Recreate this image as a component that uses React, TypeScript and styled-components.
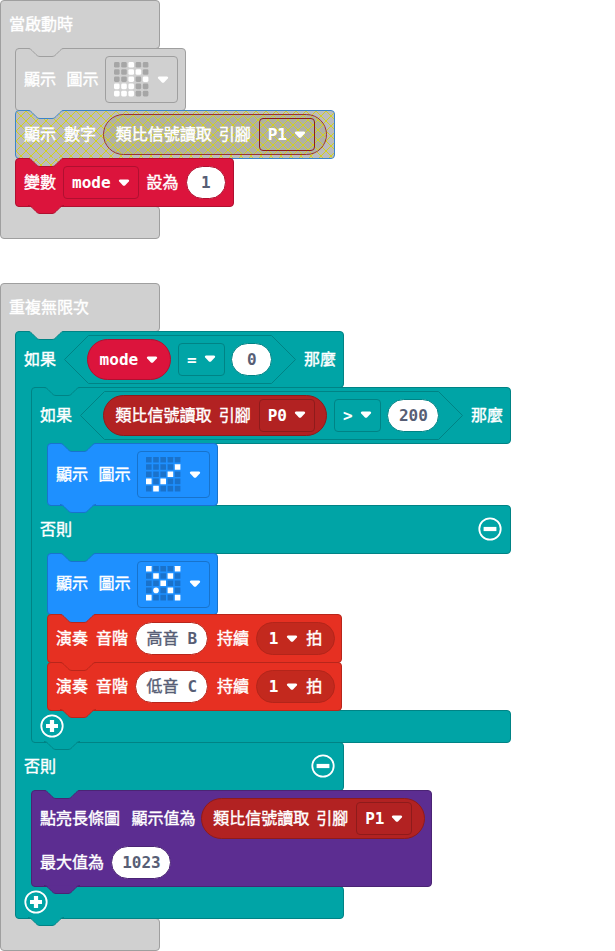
import React from "react";
import styled, { createGlobalStyle, css } from "styled-components";

const GlobalStyle = createGlobalStyle`
  * { box-sizing: border-box; }
  body { margin: 0; background: #fff; overflow: hidden; }
`;

type Tone = { fill: string; line: string };
const tones = {
  grey: { fill: "#d0d0d0", line: "#9f9f9f" },
  logic: { fill: "#00a4a6", line: "#008385" },
  variable: { fill: "#dc143c", line: "#b01030" },
  pins: { fill: "#b22222", line: "#8e1b1b" },
  basic: { fill: "#1e90ff", line: "#1873cc" },
  music: { fill: "#e63022", line: "#b8261b" },
  beat: { fill: "#c3291e", line: "#b3251a" },
  led: { fill: "#5c2d91", line: "#4a2474" },
  disabled: { fill: "#bcbcbc", line: "#3b85c8" },
  disabledPins: { fill: "#b0b0a4", line: "#9b3434" },
} satisfies Record<string, Tone>;

const Workspace = styled.main`
  display: flex;
  flex-direction: column;
  align-items: flex-start;
  gap: 44px;
  width: 615px;
  height: 951px;
  overflow: hidden;
  font: 700 16px/24px "DejaVu Sans Mono", "Noto Sans CJK TC", monospace;
  color: #fff;
`;

const Label = styled.span<{ $gap?: number }>`
  flex: none;
  margin-left: ${(p) => p.$gap ?? 0}px;
  font-weight: 400;
  -webkit-text-stroke: 0.4px currentColor;
  white-space: pre;
`;

const Code = styled.span<{ $gap?: number }>`
  flex: none;
  margin-left: ${(p) => p.$gap ?? 0}px;
`;

const Wrap = styled.div`
  position: relative;
  display: flex;
  flex-direction: column;
  align-items: flex-start;
  margin-bottom: -1px;
`;

const Script = styled.section`
  display: flex;
  flex-direction: column;
  & > ${Wrap} { margin-bottom: 0; }
`;

const Bar = styled.div<{ $tone: Tone; $w: number; $h: number; $part: "head" | "mid" | "foot" }>`
  display: flex;
  align-items: center;
  width: ${(p) => p.$w}px;
  height: ${(p) => p.$h + 1}px;
  padding: 0 8px 1px 8px;
  background: ${(p) => p.$tone.fill};
  border: 1px solid ${(p) => p.$tone.line};
  border-radius: ${(p) => (p.$part === "head" ? "4px 4px 4px 0" : p.$part === "mid" ? "0 4px 4px 0" : "0 4px 4px 4px")};
  & ${Label}, & ${Code} { padding-top: 1px; }
`;

const Mouth = styled.div`
  display: flex;
  margin: -1px 0;
  position: relative;
  z-index: 1;
`;

const Spine = styled.div<{ $tone: Tone; $w: number }>`
  flex: none;
  width: ${(p) => p.$w + 3}px;
  margin-right: -3px;
  background: ${(p) => p.$tone.fill};
  border-left: 1px solid ${(p) => p.$tone.line};
`;

const Stack = styled.div`
  position: relative;
  display: flex;
  flex-direction: column;
  align-items: flex-start;
  & > *:last-child { margin-bottom: 0; }
`;

const Statement = styled.div<{ $tone: Tone; $w: number; $h: number }>`
  position: relative;
  display: flex;
  flex-direction: column;
  width: ${(p) => p.$w}px;
  height: ${(p) => p.$h + 1}px;
  margin-bottom: -1px;
  padding-left: 8px;
  background: ${(p) => p.$tone.fill};
  border: 1px solid ${(p) => p.$tone.line};
  border-radius: 4px;
`;

const Row = styled.div<{ $h?: number }>`
  position: relative;
  display: flex;
  align-items: center;
  ${(p) => (p.$h ? css`height: ${p.$h}px;` : css`flex: 1;`)}
`;

const Field = styled.span<{ $tone: Tone; $gap: number; $w: number; $h?: number }>`
  flex: none;
  display: flex;
  align-items: center;
  justify-content: space-between;
  width: ${(p) => p.$w}px;
  height: ${(p) => p.$h ?? 33}px;
  margin-left: ${(p) => p.$gap}px;
  padding: 0 8px;
  border: 1px solid ${(p) => p.$tone.line};
  border-radius: 4px;
`;

const Pill = styled.span<{ $gap: number; $w: number; $line: string }>`
  flex: none;
  display: flex;
  align-items: center;
  justify-content: center;
  width: ${(p) => p.$w}px;
  height: 33px;
  margin-left: ${(p) => p.$gap}px;
  background: #fff;
  border: 1px solid ${(p) => p.$line};
  border-radius: 17px;
  color: #575e75;
`;

const Reporter = styled.span<{ $tone: Tone; $gap: number; $w: number; $h?: number }>`
  position: relative;
  flex: none;
  display: flex;
  align-items: center;
  width: ${(p) => p.$w}px;
  height: ${(p) => p.$h ?? 41}px;
  margin-left: ${(p) => p.$gap}px;
  padding-left: 11.6px;
  background: ${(p) => p.$tone.fill};
  border: 1px solid ${(p) => p.$tone.line};
  border-radius: 21px;
`;

const Condition = styled.span<{ $w: number }>`
  position: relative;
  flex: none;
  display: flex;
  align-items: center;
  width: ${(p) => p.$w}px;
  height: 49px;
  margin-left: 8px;
  padding-left: 23px;
`;

const Backdrop = styled.svg`
  position: absolute;
  inset: 0;
  width: 100%;
  height: 100%;
  overflow: visible;
`;

const Connector = styled.svg<{ $at: "top" | "bottom" }>`
  position: absolute;
  z-index: 2;
  left: 11px;
  ${(p) => (p.$at === "top" ? "top: -1px;" : "bottom: -9px;")}
  width: 38px;
  height: 10px;
`;

/* Wrap has no border of its own, so its connectors sit one pixel further in. */
const WrapConnector = styled(Connector)`
  left: 12px;
  ${(p) => (p.$at === "top" ? "top: 0;" : "bottom: -8px;")}
`;

const Marks = styled.svg`
  display: block;
  flex: none;
`;

const Toggle = styled.svg`
  display: block;
  flex: none;
`;

const Spacer = styled.span`
  flex: 1;
`;

const NOTCH = "c2 0 3 1 4 2l4 4c1 1 2 2 4 2h12c2 0 3 -1 4 -2l4 -4c1 -1 2 -2 4 -2";

function HatchDef({ id, x = 0, y = 0 }: { id: string; x?: number; y?: number }) {
  return (
    <pattern id={id} width="10" height="10" x={x} y={y} patternUnits="userSpaceOnUse">
      <path d="M0 0L10 10M10 0L0 10" stroke="#d2d21c" strokeWidth="1" />
    </pattern>
  );
}

function Joint({ at, fill, line, hatched, outer }: {
  at: "top" | "bottom"; fill: string; line: string; hatched?: boolean; outer?: boolean;
}) {
  const Box = outer ? WrapConnector : Connector;
  return (
    <Box $at={at} viewBox="0 0 38 10">
      {hatched && <defs><HatchDef id="hatch-joint" x={-11} y={2} /></defs>}
      <rect x="3" y="0" width="32" height="1.2" fill={fill} />
      <path d={`M1 .5${NOTCH}z`} fill={fill} />
      {hatched && <path d={`M1 .5${NOTCH}z`} fill="url(#hatch-joint)" />}
      <path d={`M1 .5${NOTCH}`} fill="none" stroke={line} />
    </Box>
  );
}

function Arrow() {
  return (
    <Marks width="12" height="8" viewBox="0 0 12 8">
      <path d="M1.9 .5H10.1Q11.9 .9 10.8 2.4L7.3 6.3Q6 7.4 4.7 6.3L1.2 2.4Q.1 .9 1.9 .5Z" fill="#fff" />
    </Marks>
  );
}

function LedGrid({ rows, off, round }: { rows: string[]; off: string; round?: boolean }) {
  return (
    <Marks width="36" height="36" viewBox="0 0 36 36">
      {rows.flatMap((row, y) =>
        [...row].map((c, x) => (
          <rect key={`${x}-${y}`} x={x * 7.2} y={y * 7.2} width="5.6" height="5.6"
            rx={c === "o" ? 2.8 : round ? 1.4 : 0.2} fill={c === "." ? off : "#fff"} />
        ))
      )}
    </Marks>
  );
}

function RoundButton({ plus }: { plus?: boolean }) {
  return (
    <Toggle width="24" height="24" viewBox="0 0 24 24">
      <circle cx="12" cy="12" r="10.7" fill="none" stroke="#fff" strokeWidth="1.8" />
      <path d={plus ? "M6 12H18M12 6V18" : "M5.6 12H18.4"} stroke="#fff" strokeWidth="4.2" />
    </Toggle>
  );
}

function ShowIcon({ tone, above, rows, off, h = 62, last, round }: {
  tone: Tone; above: string; rows: string[]; off: string; h?: number; last?: boolean; round?: boolean;
}) {
  return (
    <Statement $tone={tone} $w={171} $h={h}>
      <Joint at="top" fill={above} line={tone.line} />
      <Row>
        <Label>顯示</Label>
        <Label $gap={10.5}>圖示</Label>
        <Field $tone={tone} $gap={6.5} $w={73} $h={47}>
          <LedGrid rows={rows} off={off} round={round} />
          <Arrow />
        </Field>
      </Row>
      {last && <Joint at="bottom" fill={tone.fill} line={tone.line} />}
    </Statement>
  );
}

function AnalogRead({ pin, gap, tone = tones.pins, fieldTone = tones.pins, hatched }: {
  pin: string; gap: number; tone?: Tone; fieldTone?: Tone; hatched?: boolean;
}) {
  return (
    <Reporter $tone={tone} $gap={gap} $w={224}>
      {hatched && (
        <Backdrop>
          <defs><HatchDef id="hatch-pins" x={4} y={5} /></defs>
          <rect width="100%" height="100%" rx="20" fill="url(#hatch-pins)" />
        </Backdrop>
      )}
      <Row>
        <Label>類比信號讀取</Label>
        <Label $gap={7}>引腳</Label>
        <Field $tone={fieldTone} $gap={8} $w={56}>
          <Code>{pin}</Code>
          <Arrow />
        </Field>
      </Row>
    </Reporter>
  );
}

function Hexagon({ w }: { w: number }) {
  return (
    <Backdrop viewBox={`0 0 ${w} 49`}>
      <path d={`M24.5 .5H${w - 24.5}L${w - 0.5} 24.5L${w - 24.5} 48.5H24.5L.5 24.5Z`} fill="none" stroke={tones.logic.line} />
    </Backdrop>
  );
}

function Comparison({ w, left, op, value, valueWidth }: {
  w: number; left: React.ReactNode; op: string; value: string; valueWidth: number;
}) {
  return (
    <Condition $w={w}>
      <Hexagon w={w} />
      {left}
      <Field $tone={tones.logic} $gap={7} $w={47}>
        <Code>{op}</Code>
        <Arrow />
      </Field>
      <Pill $gap={6.4} $w={valueWidth} $line={tones.logic.line}><Code>{value}</Code></Pill>
    </Condition>
  );
}

function PlayTone({ register, note, above, last }: { register: string; note: string; above: string; last?: boolean }) {
  return (
    <Statement $tone={tones.music} $w={295} $h={48}>
      <Joint at="top" fill={above} line={tones.music.line} />
      <Row>
        <Label>演奏</Label>
        <Label $gap={8}>音階</Label>
        <Pill $gap={7.4} $w={73} $line={tones.music.line}>
          <Label>{register}</Label>
          <Code $gap={9}>{note}</Code>
        </Pill>
        <Label $gap={8.6}>持續</Label>
        <Reporter $tone={tones.beat} $gap={7} $w={79} $h={33}>
          <Code>1</Code>
          <Code $gap={8}><Arrow /></Code>
          <Label $gap={8}>拍</Label>
        </Reporter>
      </Row>
      {last && <Joint at="bottom" fill={tones.music.fill} line={tones.music.line} />}
    </Statement>
  );
}

function StartScript() {
  return (
    <Script>
      <Wrap>
        <Bar $tone={tones.grey} $w={160} $h={48} $part="head"><Label>當啟動時</Label></Bar>
        <Mouth>
          <Spine $tone={tones.grey} $w={15} />
          <Stack>
            <ShowIcon tone={tones.grey} above={tones.grey.fill} off="#a6a6a6" round
              rows={["..#..", "..##.", "..#.#", "###..", "###.."]} />
            <Statement $tone={tones.disabled} $w={320} $h={48}>
              <Backdrop>
                <defs><HatchDef id="hatch-block" /></defs>
                <rect width="100%" height="100%" rx="3" fill="url(#hatch-block)" />
              </Backdrop>
              <Joint at="top" fill={tones.grey.fill} line={tones.disabled.line} />
              <Row>
                <Label>顯示</Label>
                <Label $gap={8}>數字</Label>
                <AnalogRead pin="P1" gap={7} tone={tones.disabledPins} fieldTone={{ fill: "", line: "#8b1d1d" }} hatched />
              </Row>
            </Statement>
            <Statement $tone={tones.variable} $w={219} $h={48}>
              <Joint at="top" fill={tones.disabled.fill} line={tones.variable.line} hatched />
              <Row>
                <Label>變數</Label>
                <Field $tone={tones.variable} $gap={7} $w={76}>
                  <Code>mode</Code>
                  <Arrow />
                </Field>
                <Label $gap={7.5}>設為</Label>
                <Pill $gap={7.4} $w={40} $line={tones.variable.line}><Code>1</Code></Pill>
              </Row>
              <Joint at="bottom" fill={tones.variable.fill} line={tones.variable.line} />
            </Statement>
          </Stack>
        </Mouth>
        <Bar $tone={tones.grey} $w={160} $h={32} $part="foot" />
      </Wrap>
    </Script>
  );
}

function InnerIf() {
  const t = tones.logic;
  return (
    <Wrap>
      <Joint outer at="top" fill={t.fill} line={t.line} />
      <Bar $tone={t} $w={480} $h={56} $part="head">
        <Label>如果</Label>
        <Comparison w={383} left={<AnalogRead pin="P0" gap={0} />} op=">" value="200" valueWidth={52} />
        <Label $gap={8}>那麼</Label>
      </Bar>
      <Mouth>
        <Spine $tone={t} $w={16} />
        <Stack>
          <ShowIcon tone={tones.basic} above={t.fill} off="#1a72cb" last
            rows={[".....", "....#", "...#.", "#.#..", ".#..."]} />
        </Stack>
      </Mouth>
      <Bar $tone={t} $w={480} $h={48} $part="mid">
        <Label>否則</Label>
        <Spacer />
        <RoundButton />
      </Bar>
      <Mouth>
        <Spine $tone={t} $w={16} />
        <Stack>
          <ShowIcon tone={tones.basic} above={t.fill} off="#1a72cb" h={61}
            rows={["#...#", ".#.#.", "..#..", ".o.#.", "#...#"]} />
          <PlayTone register="高音" note="B" above={tones.basic.fill} />
          <PlayTone register="低音" note="C" above={tones.music.fill} last />
        </Stack>
      </Mouth>
      <Bar $tone={t} $w={480} $h={32} $part="foot"><RoundButton plus /></Bar>
      <Joint outer at="bottom" fill={t.fill} line={t.line} />
    </Wrap>
  );
}

function PlotBarGraph() {
  return (
    <Statement $tone={tones.led} $w={401} $h={96}>
      <Joint at="top" fill={tones.logic.fill} line={tones.led.line} />
      <Row $h={55}>
        <Label>點亮長條圖</Label>
        <Label $gap={11.5}>顯示值為</Label>
        <AnalogRead pin="P1" gap={5} />
      </Row>
      <Row $h={33}>
        <Label>最大值為</Label>
        <Pill $gap={7.4} $w={60} $line={tones.led.line}><Code>1023</Code></Pill>
      </Row>
      <Joint at="bottom" fill={tones.led.fill} line={tones.led.line} />
    </Statement>
  );
}

function ForeverScript() {
  const t = tones.logic;
  return (
    <Script>
      <Wrap>
        <Bar $tone={tones.grey} $w={160} $h={48} $part="head"><Label>重複無限次</Label></Bar>
        <Mouth>
          <Spine $tone={tones.grey} $w={15} />
          <Stack>
            <Wrap>
              <Joint outer at="top" fill={tones.grey.fill} line={t.line} />
              <Bar $tone={t} $w={329} $h={56} $part="head">
                <Label>如果</Label>
                <Comparison w={232} op="=" value="0" valueWidth={41}
                  left={
                    <Reporter $tone={tones.variable} $gap={0} $w={84}>
                      <Code>mode</Code>
                      <Code $gap={8}><Arrow /></Code>
                    </Reporter>
                  } />
                <Label $gap={8}>那麼</Label>
              </Bar>
              <Mouth>
                <Spine $tone={t} $w={16} />
                <Stack><InnerIf /></Stack>
              </Mouth>
              <Bar $tone={t} $w={329} $h={48} $part="mid">
                <Label>否則</Label>
                <Spacer />
                <RoundButton />
              </Bar>
              <Mouth>
                <Spine $tone={t} $w={16} />
                <Stack><PlotBarGraph /></Stack>
              </Mouth>
              <Bar $tone={t} $w={329} $h={32} $part="foot"><RoundButton plus /></Bar>
              <Joint outer at="bottom" fill={t.fill} line={t.line} />
            </Wrap>
          </Stack>
        </Mouth>
        <Bar $tone={tones.grey} $w={160} $h={32} $part="foot" />
      </Wrap>
    </Script>
  );
}

export default function App() {
  return (
    <>
      <GlobalStyle />
      <Workspace>
        <StartScript />
        <ForeverScript />
      </Workspace>
    </>
  );
}
